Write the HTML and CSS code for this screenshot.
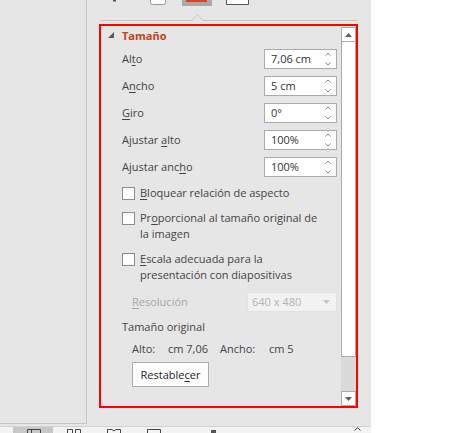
FILE: index.html
```html
<!DOCTYPE html>
<html lang="es">
<head>
<meta charset="utf-8">
<title>Formato de imagen - Tamaño</title>
<link rel="stylesheet" href="styles.css">
</head>
<body>
<div class="app">
  <div class="main">
    <aside class="slides"></aside>
    <section class="pane">
      <div class="tabs">
        <div class="tab">
          <svg class="tab-ico" width="30" height="6" viewBox="0 0 30 6"><rect x="11" y="0" width="3" height="1.5" fill="#555"/></svg>
        </div>
        <div class="tab">
          <svg class="tab-ico" width="30" height="6" viewBox="0 0 30 6"><path d="M8.5 0 V2.5 Q8.5 4.5 10.5 4.5 H21.5 Q23.5 4.5 23.5 2.5 V0" fill="#fff" stroke="#9a9a9a"/></svg>
        </div>
        <div class="tab tab-active"><span class="tab-bar"></span></div>
        <div class="tab tab-wide">
          <svg class="tab-ico" width="24" height="6" viewBox="0 0 24 6"><path d="M0.5 0 V4.5 H22.5 V0" fill="#fff" stroke="#555"/></svg>
        </div>
      </div>
      <svg class="tab-rule" width="257" height="8" viewBox="0 0 257 8"><path d="M0 7.5 H92 L97.5 1.5 L103 7.5 H257" fill="none" stroke="#c6c6c6"/></svg>

      <div class="group">
        <div class="group-body">
          <div class="group-head">
            <svg class="caret" width="6" height="6" viewBox="0 0 6 6"><polygon points="6,0 6,6 0,6" fill="#5a5a5a"/></svg>
            <span class="group-title">Tamaño</span>
          </div>

          <div class="fields">
            <div class="field">
              <span class="label">Al<u>t</u>o</span>
              <div class="spin"><span class="spin-val">7,06 cm</span><span class="spin-arrows"><svg width="6" height="4" viewBox="0 0 6 4"><path d="M0.5 3.5 L3 1 L5.5 3.5" fill="none" stroke="#8a8a8a"/></svg><svg width="6" height="4" viewBox="0 0 6 4"><path d="M0.5 0.5 L3 3 L5.5 0.5" fill="none" stroke="#8a8a8a"/></svg></span></div>
            </div>
            <div class="field">
              <span class="label">A<u>n</u>cho</span>
              <div class="spin"><span class="spin-val">5 cm</span><span class="spin-arrows"><svg width="6" height="4" viewBox="0 0 6 4"><path d="M0.5 3.5 L3 1 L5.5 3.5" fill="none" stroke="#8a8a8a"/></svg><svg width="6" height="4" viewBox="0 0 6 4"><path d="M0.5 0.5 L3 3 L5.5 0.5" fill="none" stroke="#8a8a8a"/></svg></span></div>
            </div>
            <div class="field">
              <span class="label"><u>G</u>iro</span>
              <div class="spin"><span class="spin-val">0°</span><span class="spin-arrows"><svg width="6" height="4" viewBox="0 0 6 4"><path d="M0.5 3.5 L3 1 L5.5 3.5" fill="none" stroke="#8a8a8a"/></svg><svg width="6" height="4" viewBox="0 0 6 4"><path d="M0.5 0.5 L3 3 L5.5 0.5" fill="none" stroke="#8a8a8a"/></svg></span></div>
            </div>
            <div class="field">
              <span class="label">Ajustar <u>a</u>lto</span>
              <div class="spin"><span class="spin-val">100%</span><span class="spin-arrows"><svg width="6" height="4" viewBox="0 0 6 4"><path d="M0.5 3.5 L3 1 L5.5 3.5" fill="none" stroke="#8a8a8a"/></svg><svg width="6" height="4" viewBox="0 0 6 4"><path d="M0.5 0.5 L3 3 L5.5 0.5" fill="none" stroke="#8a8a8a"/></svg></span></div>
            </div>
            <div class="field">
              <span class="label">Ajustar anc<u>h</u>o</span>
              <div class="spin"><span class="spin-val">100%</span><span class="spin-arrows"><svg width="6" height="4" viewBox="0 0 6 4"><path d="M0.5 3.5 L3 1 L5.5 3.5" fill="none" stroke="#8a8a8a"/></svg><svg width="6" height="4" viewBox="0 0 6 4"><path d="M0.5 0.5 L3 3 L5.5 0.5" fill="none" stroke="#8a8a8a"/></svg></span></div>
            </div>
          </div>

          <div class="checks">
            <label class="check"><span class="box"></span><span class="check-text"><u>B</u>loquear relación de aspecto</span></label>
            <label class="check"><span class="box"></span><span class="check-text">Pr<u>o</u>porcional al tamaño original de la imagen</span></label>
            <label class="check"><span class="box"></span><span class="check-text"><u>E</u>scala adecuada para la presentación con diapositivas</span></label>
          </div>

          <div class="res-row">
            <span class="label disabled"><u>R</u>esolución</span>
            <div class="select"><span>640 x 480</span><svg width="7" height="4" viewBox="0 0 7 4"><polygon points="0,0 7,0 3.5,4" fill="#c4c4c4"/></svg></div>
          </div>

          <div class="orig-title">Tamaño original</div>
          <div class="orig-dims">
            <span>Alto:</span><span>cm 7,06</span><span>Ancho:</span><span>cm 5</span>
          </div>
          <button class="reset" type="button">Restable<u>c</u>er</button>
        </div>

        <div class="scrollbar">
          <div class="sb-btn"><svg width="7" height="4" viewBox="0 0 7 4"><polygon points="0,4 7,4 3.5,0" fill="#606060"/></svg></div>
          <div class="sb-thumb"></div>
          <div class="sb-track"></div>
          <div class="sb-btn"><svg width="7" height="4" viewBox="0 0 7 4"><polygon points="0,0 7,0 3.5,4" fill="#606060"/></svg></div>
        </div>
      </div>
    </section>
  </div>

  <footer class="status">
    <div class="views">
      <div class="view view-active"><svg width="16" height="6" viewBox="0 0 16 6"><path d="M1.5 6 V2.5 H14.5 V6 M5.5 2.5 V6" fill="none" stroke="#444"/></svg></div>
      <div class="view"><svg width="16" height="6" viewBox="0 0 16 6"><path d="M1.5 6 V2.5 H6.5 V6 M9.5 6 V2.5 H14.5 V6" fill="none" stroke="#444"/></svg></div>
      <div class="view"><svg width="16" height="6" viewBox="0 0 16 6"><path d="M1.5 6 V2.5 H6 L8 4 L10 2.5 H14.5 V6" fill="none" stroke="#444"/></svg></div>
      <div class="view"><svg width="16" height="6" viewBox="0 0 16 6"><path d="M1.5 6 V2.5 H14.5 V6" fill="none" stroke="#444"/></svg></div>
    </div>
    <span class="zoom-knob"></span>
    <svg class="status-caret" width="7" height="4" viewBox="0 0 7 4"><path d="M0.5 3.5 L3.5 0.8 L6.5 3.5" fill="none" stroke="#444"/></svg>
  </footer>
</div>
</body>
</html>
```

FILE: styles.css
```css
* { box-sizing: border-box; }

html, body {
  margin: 0;
  padding: 0;
  background: #ffffff;
}

body {
  font-family: "Open Sans", "Noto Sans", "Liberation Sans", sans-serif;
  font-size: 11px;
  line-height: 16px;
  color: #444444;
}

u {
  text-decoration: underline;
  text-underline-offset: 2px;
  text-decoration-thickness: 1px;
}

.app {
  width: 371px;
  height: 433px;
  display: flex;
  flex-direction: column;
  overflow: hidden;
}

.main {
  height: 426px;
  display: flex;
  background: #e6e6e6;
}

.slides {
  width: 87px;
  height: 424px;
  border-right: 1px solid #c6c6c6;
  border-bottom: 1px solid #c6c6c6;
}

.pane {
  flex: 1;
  padding-left: 12px;
}

/* tab strip (cropped at the top) */
.tabs {
  height: 13px;
  display: flex;
  align-items: flex-start;
  gap: 10px;
  padding-left: 3px;
}

.tab {
  width: 30px;
  height: 6px;
}

.tab-wide { width: 30px; padding-left: 4px; }

.tab-ico { display: block; }

.tab-active {
  background: #a9a9a9;
  padding: 0 5px 0 4px;
}

.tab-bar {
  display: block;
  height: 2px;
  background: #d24726;
}

.tab-rule {
  display: block;
  margin-left: 1px;
}

/* red highlighted group */
.group {
  margin-top: 3px;
  width: 259px;
  height: 384px;
  border: 2px solid #ff0000;
  display: flex;
}

.group-body {
  flex: 1;
  padding: 2px 4px 0 21px;
  display: flex;
  flex-direction: column;
  align-items: stretch;
}

.group-head {
  height: 16px;
  display: flex;
  align-items: center;
  margin-left: -14px;
  gap: 8px;
}

.caret { margin-top: -3px; }

.group-title {
  font-weight: 700;
  color: #c43e1c;
  font-size: 11px;
}

.fields {
  margin-top: 5px;
  display: flex;
  flex-direction: column;
  gap: 7px;
}

.field {
  height: 20px;
  display: flex;
  align-items: center;
  justify-content: space-between;
}

.spin {
  width: 73px;
  height: 20px;
  border: 1px solid #ababab;
  background: #ffffff;
  display: flex;
  align-items: stretch;
  padding-left: 6px;
  color: #333333;
}

.spin-val {
  flex: 1;
  line-height: 18px;
}

.spin-arrows {
  width: 6px;
  margin-right: 5px;
  display: flex;
  flex-direction: column;
  justify-content: space-between;
  padding: 2px 0 2px;
}

.spin-arrows svg { display: block; }

.checks {
  margin-top: 8px;
  display: flex;
  flex-direction: column;
  gap: 9px;
}

.check {
  display: flex;
  align-items: flex-start;
}

.box {
  flex: none;
  width: 13px;
  height: 13px;
  margin-top: 2px;
  margin-right: 5px;
  border: 1px solid #8c8c8c;
  background: #ffffff;
}

.check-text {
  max-width: 186px;
}

.res-row {
  margin-top: 9px;
  height: 20px;
  display: flex;
  align-items: center;
  justify-content: space-between;
  padding-left: 10px;
}

.disabled { color: #a6a6a6; }

.select {
  width: 90px;
  height: 20px;
  border: 1px solid #e2e2e2;
  background: #f2f2f2;
  display: flex;
  align-items: center;
  justify-content: space-between;
  padding: 0 6px 0 4px;
  color: #b3b3b3;
}

.orig-title {
  margin-top: 7px;
}

.orig-dims {
  margin-top: 6px;
  padding-left: 10px;
  display: grid;
  grid-template-columns: 36px 52px 49px auto;
}

.reset {
  margin: 5px 0 0 10px;
  width: 77px;
  height: 25px;
  padding: 0;
  border: 1px solid #adadad;
  background: #fdfdfd;
  font-family: inherit;
  font-size: 11px;
  color: #262626;
  align-self: flex-start;
}

/* scrollbar */
.scrollbar {
  width: 15px;
  margin-top: 1px;
  display: flex;
  flex-direction: column;
}

.sb-btn {
  height: 15px;
  border: 1px solid #ababab;
  background: #ffffff;
  display: flex;
  align-items: center;
  justify-content: center;
}

.sb-btn svg { display: block; }

.sb-thumb {
  height: 315px;
  border: 1px solid #ababab;
  border-top: 0;
  background: #ffffff;
}

.sb-track {
  flex: 1;
  background: #dadada;
}

/* status bar (cropped) */
.status {
  height: 7px;
  border-top: 1px solid #d2d2d2;
  background: #f3f3f3;
  display: flex;
  align-items: flex-start;
  padding-left: 13px;
  padding-right: 10px;
}

.views { display: flex; }

.view {
  width: 40px;
  height: 6px;
  display: flex;
  justify-content: center;
  padding-left: 1px;
}

.view svg { display: block; }

.view-active { background: #c8c8c8; }

.zoom-knob {
  margin-left: 38px;
  margin-top: 3px;
  width: 5px;
  height: 3px;
  background: #555555;
}

.status-caret {
  display: block;
  margin-left: auto;
  margin-top: 0;
}
```
